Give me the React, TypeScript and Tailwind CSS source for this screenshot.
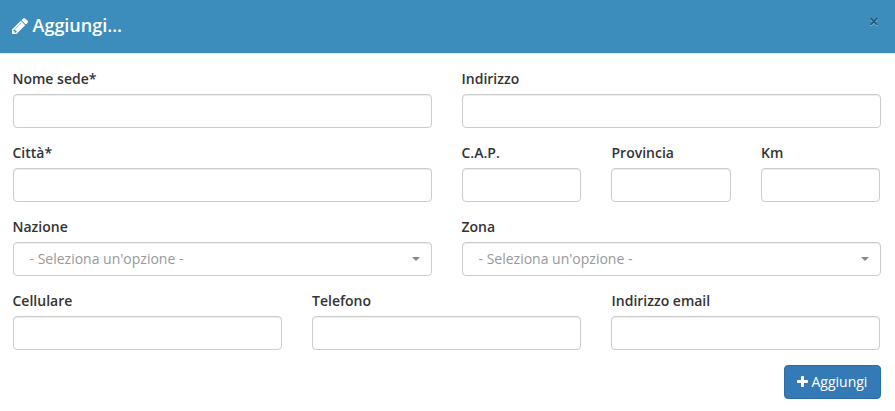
import React from "react";

const controlClass =
  "h-[34px] w-full rounded-[4px] border border-[#cccccc] bg-white text-[14px] shadow-[inset_0_1px_1px_rgba(0,0,0,0.075)] outline-none";

function Label({ text, shift = "-ml-[0.5px]" }: { text: string; shift?: string }) {
  return (
    <label className={`mb-[5px] block text-[14px] font-semibold leading-5 text-[#333333] ${shift}`}>{text}</label>
  );
}

function Field({ label, shift }: { label: string; shift?: string }) {
  return (
    <div>
      <Label text={label} shift={shift} />
      <input type="text" aria-label={label} className={`block px-3 ${controlClass}`} />
    </div>
  );
}

function SelectField({ label }: { label: string }) {
  return (
    <div>
      <Label text={label} />
      <div className={`flex items-center justify-between pl-[15.5px] pr-[11px] leading-5 text-[#999999] ${controlClass}`}>
        <span>- Seleziona un'opzione -</span>
        <span className="h-0 w-0 border-x-4 border-t-4 border-x-transparent border-t-[#888888]" />
      </div>
    </div>
  );
}

export default function App() {
  return (
    <div className="h-[411px] w-[895px] overflow-hidden bg-white font-['Open_Sans',sans-serif]">
      <header className="flex h-[54px] items-start justify-between border-b border-[#e5e5e5] bg-[#3c8dbc] pl-3 pr-4 text-white">
        <h4 className="flex items-center pt-[13px] text-[18px] font-semibold leading-[25px]">
          <svg viewBox="0 0 1515 1515" className="mr-[4.5px] h-4 w-4" fill="currentColor">
            <path d="M363 1387l91-91-235-235-91 91v107h128v128h107zM886 459q0-22-22-22-10 0-17 7l-542 542q-7 7-7 17 0 22 22 22 10 0 17-7l542-542q7-7 7-17zM832 267l416 416-832 832H0v-416zM1515 363q0 53-37 90l-166 166-416-416 166-165q36-38 90-38 53 0 91 38l235 234q37 39 37 91z" />
          </svg>
          Aggiungi...
        </h4>
        <button className="mt-[11px] text-[18px] font-semibold leading-5 text-black opacity-40 [text-shadow:0_1px_0_#fff]">
          ×
        </button>
      </header>
      <main className="pl-[13px] pr-[14px] pt-[15px]">
        <div className="grid grid-cols-[419px_419px] gap-x-[30px] gap-y-[15px]">
          <Field label="Nome sede*" />
          <Field label="Indirizzo" />
          <Field label="Città*" />
          <div className="grid grid-cols-[119px_120px_119px] gap-[30px]">
            <Field label="C.A.P." />
            <Field label="Provincia" shift="ml-[0.5px]" />
            <Field label="Km" shift="ml-0" />
          </div>
          <SelectField label="Nazione" />
          <SelectField label="Zona" />
        </div>
        <div className="mt-[15px] grid grid-cols-[269px_269px_269px] gap-[30px]">
          <Field label="Cellulare" />
          <Field label="Telefono" shift="ml-0" />
          <Field label="Indirizzo email" shift="ml-[0.5px]" />
        </div>
        <div className="mt-[15px] flex justify-end">
          <button className="flex h-[34px] w-[97px] items-center rounded-[4px] border border-[#2e6da4] bg-[#337ab7] pl-[11.5px] text-[14px] leading-5 text-white">
            <svg viewBox="0 192 1408 1408" className="mb-[2px] mr-[4px] h-[11px] w-[11px]" fill="currentColor">
              <path d="M1408 800v192q0 40-28 68t-68 28h-416v416q0 40-28 68t-68 28h-192q-40 0-68-28t-28-68v-416h-416q-40 0-68-28t-28-68v-192q0-40 28-68t68-28h416v-416q0-40 28-68t68-28h192q40 0 68 28t28 68v416h416q40 0 68 28t28 68z" />
            </svg>
            <span className="-mt-px">Aggiungi</span>
          </button>
        </div>
      </main>
    </div>
  );
}
